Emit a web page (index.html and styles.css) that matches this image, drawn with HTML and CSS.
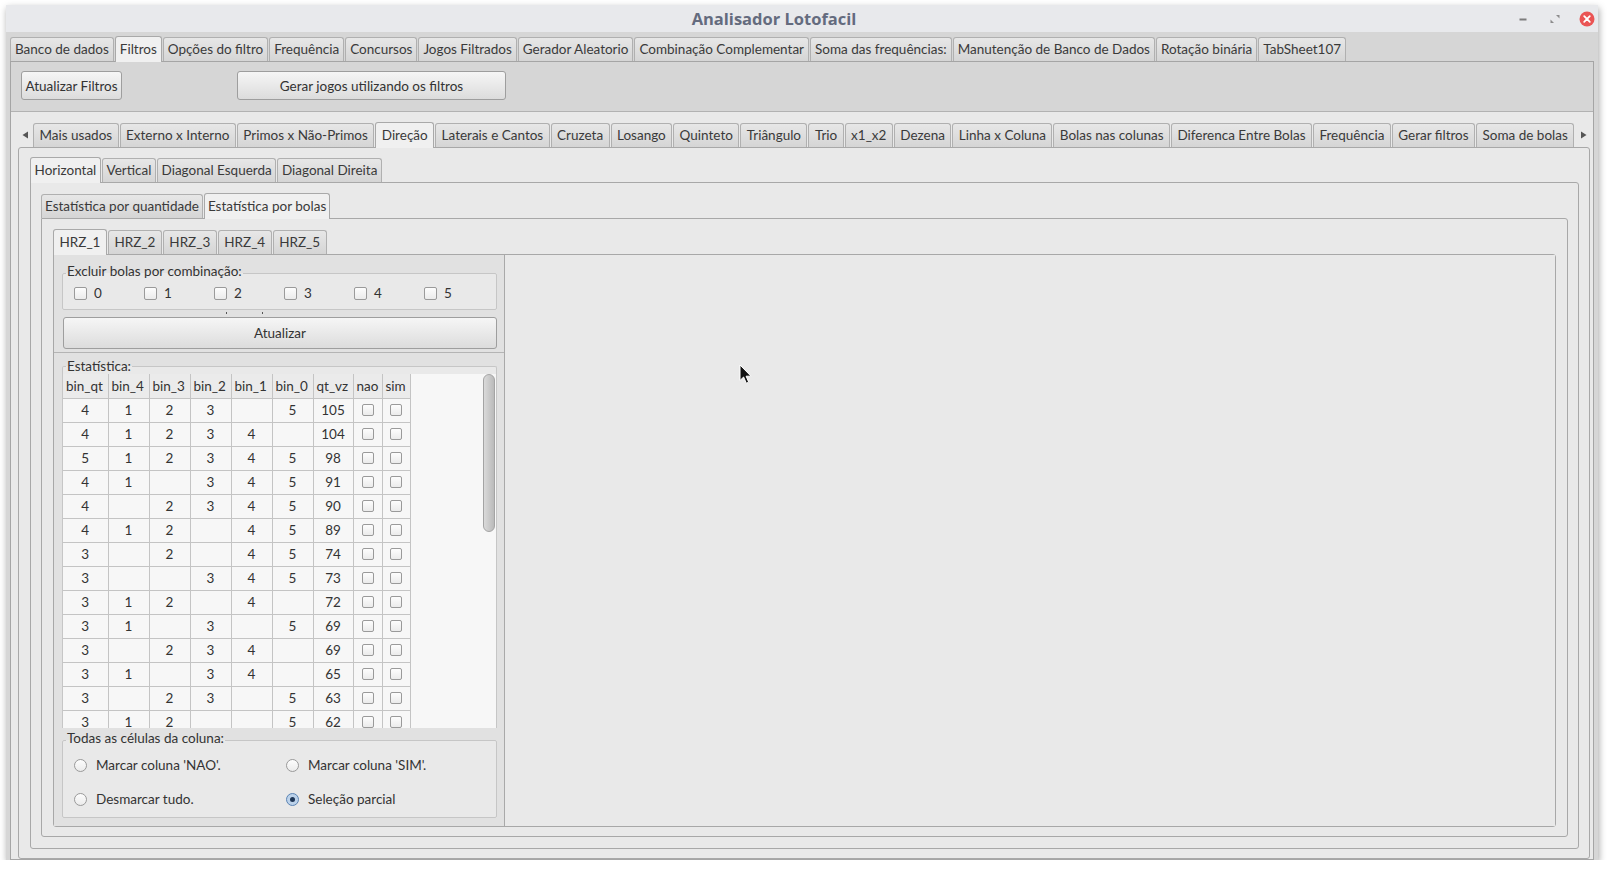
FILE: index.html
```html
<!DOCTYPE html>
<html lang="pt">
<head>
<meta charset="utf-8">
<title>Analisador Lotofacil</title>
<link rel="stylesheet" href="styles.css">
</head>
<body>
<div class="window">
  <div class="titlebar">
    <div class="title">Analisador Lotofacil</div>
    <div class="wbtns">
      <svg class="wb" viewBox="0 0 20 20"><rect x="6.5" y="9.5" width="7" height="2" fill="#7d7d7d"/></svg>
      <svg class="wb" viewBox="0 0 20 20"><polygon points="11,6 14.5,6 14.5,9.5" fill="#8c8c8c"/><polygon points="5.5,10.5 5.5,14 9,14" fill="#8c8c8c"/></svg>
      <svg class="wb" viewBox="0 0 20 20"><circle cx="10" cy="10" r="7.5" fill="#ea5454"/><path d="M7.2 7.2 L12.8 12.8 M12.8 7.2 L7.2 12.8" stroke="#fff" stroke-width="1.8" stroke-linecap="round"/></svg>
    </div>
  </div>

  <div class="tabs toptabs">
    <div class="tab">Banco de dados</div>
    <div class="tab sel">Filtros</div>
    <div class="tab">Opções do filtro</div>
    <div class="tab">Frequência</div>
    <div class="tab">Concursos</div>
    <div class="tab">Jogos Filtrados</div>
    <div class="tab">Gerador Aleatorio</div>
    <div class="tab">Combinação Complementar</div>
    <div class="tab">Soma das frequências:</div>
    <div class="tab">Manutenção de Banco de Dados</div>
    <div class="tab">Rotação binária</div>
    <div class="tab">TabSheet107</div>
  </div>

  <div class="panel filtros">
    <div class="toolbar">
      <button class="btn b1">Atualizar Filtros</button>
      <button class="btn b2">Gerar jogos utilizando os filtros</button>
    </div>
    <div class="fbody">
      <div class="tabs subtabs">
        <div class="arrow"><svg width="7" height="8" viewBox="0 0 7 8"><polygon points="6,0.5 6,7.5 0.5,4" fill="#555"/></svg></div>
        <div class="tab">Mais usados</div>
        <div class="tab">Externo x Interno</div>
        <div class="tab">Primos x Não-Primos</div>
        <div class="tab sel">Direção</div>
        <div class="tab">Laterais e Cantos</div>
        <div class="tab">Cruzeta</div>
        <div class="tab">Losango</div>
        <div class="tab">Quinteto</div>
        <div class="tab">Triângulo</div>
        <div class="tab">Trio</div>
        <div class="tab">x1_x2</div>
        <div class="tab">Dezena</div>
        <div class="tab">Linha x Coluna</div>
        <div class="tab">Bolas nas colunas</div>
        <div class="tab">Diferenca Entre Bolas</div>
        <div class="tab">Frequência</div>
        <div class="tab">Gerar filtros</div>
        <div class="tab">Soma de bolas</div>
        <div class="arrow"><svg width="7" height="8" viewBox="0 0 7 8"><polygon points="1,0.5 1,7.5 6.5,4" fill="#555"/></svg></div>
      </div>
      <div class="panel direcao">
        <div class="tabs htabs">
          <div class="tab sel">Horizontal</div>
          <div class="tab">Vertical</div>
          <div class="tab">Diagonal Esquerda</div>
          <div class="tab">Diagonal Direita</div>
        </div>
        <div class="panel horiz">
          <div class="tabs etabs">
            <div class="tab">Estatística por quantidade</div>
            <div class="tab sel">Estatística por bolas</div>
          </div>
          <div class="panel bolas">
            <div class="tabs rtabs">
              <div class="tab sel">HRZ_1</div>
              <div class="tab">HRZ_2</div>
              <div class="tab">HRZ_3</div>
              <div class="tab">HRZ_4</div>
              <div class="tab">HRZ_5</div>
            </div>
            <div class="panel hrz">
              <div class="leftpane">
                <div class="topsec">
                  <fieldset class="grp excl">
                    <legend>Excluir bolas por combinação:</legend>
                    <div class="cbrow">
                      <label class="cbi"><span class="cb"></span>0</label>
                      <label class="cbi"><span class="cb"></span>1</label>
                      <label class="cbi"><span class="cb"></span>2</label>
                      <label class="cbi"><span class="cb"></span>3</label>
                      <label class="cbi"><span class="cb"></span>4</label>
                      <label class="cbi"><span class="cb"></span>5</label>
                    </div>
                  </fieldset>
                  <div class="dots"><span class="dot"></span><span class="dot"></span></div>
                  <button class="btn atual">Atualizar</button>
                </div>
                <div class="lowsec">
                  <fieldset class="grp est">
                    <legend>Estatística:</legend>
                    <div class="vp">
                      <table class="grid">
                        <colgroup>
                          <col class="c45"><col class="c41"><col class="c41"><col class="c41"><col class="c41"><col class="c41"><col class="c40"><col class="c29"><col class="c28">
                        </colgroup>
                        <thead>
                          <tr><th>bin_qt</th><th>bin_4</th><th>bin_3</th><th>bin_2</th><th>bin_1</th><th>bin_0</th><th>qt_vz</th><th>nao</th><th>sim</th></tr>
                        </thead>
                        <tbody>
                          <tr><td>4</td><td>1</td><td>2</td><td>3</td><td></td><td>5</td><td>105</td><td><span class="cb sm"></span></td><td><span class="cb sm"></span></td></tr>
                          <tr><td>4</td><td>1</td><td>2</td><td>3</td><td>4</td><td></td><td>104</td><td><span class="cb sm"></span></td><td><span class="cb sm"></span></td></tr>
                          <tr><td>5</td><td>1</td><td>2</td><td>3</td><td>4</td><td>5</td><td>98</td><td><span class="cb sm"></span></td><td><span class="cb sm"></span></td></tr>
                          <tr><td>4</td><td>1</td><td></td><td>3</td><td>4</td><td>5</td><td>91</td><td><span class="cb sm"></span></td><td><span class="cb sm"></span></td></tr>
                          <tr><td>4</td><td></td><td>2</td><td>3</td><td>4</td><td>5</td><td>90</td><td><span class="cb sm"></span></td><td><span class="cb sm"></span></td></tr>
                          <tr><td>4</td><td>1</td><td>2</td><td></td><td>4</td><td>5</td><td>89</td><td><span class="cb sm"></span></td><td><span class="cb sm"></span></td></tr>
                          <tr><td>3</td><td></td><td>2</td><td></td><td>4</td><td>5</td><td>74</td><td><span class="cb sm"></span></td><td><span class="cb sm"></span></td></tr>
                          <tr><td>3</td><td></td><td></td><td>3</td><td>4</td><td>5</td><td>73</td><td><span class="cb sm"></span></td><td><span class="cb sm"></span></td></tr>
                          <tr><td>3</td><td>1</td><td>2</td><td></td><td>4</td><td></td><td>72</td><td><span class="cb sm"></span></td><td><span class="cb sm"></span></td></tr>
                          <tr><td>3</td><td>1</td><td></td><td>3</td><td></td><td>5</td><td>69</td><td><span class="cb sm"></span></td><td><span class="cb sm"></span></td></tr>
                          <tr><td>3</td><td></td><td>2</td><td>3</td><td>4</td><td></td><td>69</td><td><span class="cb sm"></span></td><td><span class="cb sm"></span></td></tr>
                          <tr><td>3</td><td>1</td><td></td><td>3</td><td>4</td><td></td><td>65</td><td><span class="cb sm"></span></td><td><span class="cb sm"></span></td></tr>
                          <tr><td>3</td><td></td><td>2</td><td>3</td><td></td><td>5</td><td>63</td><td><span class="cb sm"></span></td><td><span class="cb sm"></span></td></tr>
                          <tr><td>3</td><td>1</td><td>2</td><td></td><td></td><td>5</td><td>62</td><td><span class="cb sm"></span></td><td><span class="cb sm"></span></td></tr>
                        </tbody>
                      </table>
                      <div class="sbar"><div class="thumb"></div></div>
                    </div>
                  </fieldset>
                  <fieldset class="grp todas">
                    <legend>Todas as células da coluna:</legend>
                    <div class="radios">
                      <label class="ri"><span class="rb"></span>Marcar coluna 'NAO'.</label>
                      <label class="ri"><span class="rb"></span>Marcar coluna 'SIM'.</label>
                      <label class="ri"><span class="rb"></span>Desmarcar tudo.</label>
                      <label class="ri"><span class="rb on"></span>Seleção parcial</label>
                    </div>
                  </fieldset>
                </div>
              </div>
              <div class="rightpane">
                <svg class="cursor" width="14" height="21" viewBox="0 0 14 21"><path d="M1 1 L1 16.5 L4.6 13 L7.3 19.2 L9.7 18.2 L7.1 12.2 L12 12.2 Z" fill="#111" stroke="#fff" stroke-width="1" stroke-linejoin="round"/></svg>
              </div>
            </div>
          </div>
        </div>
      </div>
    </div>
  </div>
</div>
</body>
</html>
```

FILE: styles.css
```css
* { box-sizing: border-box; }
html, body { margin: 0; padding: 0; background: #ffffff; }
body {
  font-family: Lato, "Open Sans", "DejaVu Sans", sans-serif;
  font-size: 13.5px;
  color: #333;
  overflow: hidden;
}

.window {
  margin: 5px 0 0 6px;
  width: 1592px;
  height: 855px;
  background: #d6d6d6;
  box-shadow: 1px 3px 7px rgba(0, 0, 0, .35);
  display: flex;
  flex-direction: column;
}

.titlebar {
  height: 27px;
  flex: none;
  display: flex;
  align-items: center;
  background: #e8e9ec;
}
.title {
  flex: 1;
  text-align: center;
  padding-left: 29px;
  font-family: "Open Sans", Lato, sans-serif;
  font-weight: 700;
  font-size: 16.5px;
  color: #646b7e;
}
.wbtns { display: flex; gap: 12px; padding-right: 1px; }
.wb { width: 20px; height: 20px; display: block; }

/* tabs */
.tabs {
  display: flex;
  align-items: flex-end;
  gap: 1px;
  height: 26px;
  flex: none;
  margin-bottom: -1px;
  position: relative;
  z-index: 1;
}
.tab {
  height: 24px;
  margin-bottom: 1px;
  padding: 0 5px;
  border: 1px solid #b0b0b0;
  border-bottom: 0;
  border-radius: 3px 3px 0 0;
  background: linear-gradient(#e7e7e7, #d5d5d5);
  line-height: 22px;
  white-space: nowrap;
  color: #3a3a3a;
}
.tab.sel {
  height: 26px;
  margin-bottom: 0;
  padding-top: 1px;
  background: #f0f0f0;
  border-color: #a9a9a9;
}
.toptabs { margin-top: 4px; padding-left: 4px; }
.toptabs .tab { padding-left: 4px; padding-right: 4px; }
.subtabs .tab { padding-left: 5.45px; padding-right: 5.45px; }
.htabs .tab { padding-left: 3.6px; padding-right: 3.6px; }
.etabs .tab { padding-left: 3px; padding-right: 3px; }
.rtabs .tab { padding-left: 5.5px; padding-right: 5.5px; }

.arrow {
  width: 14px;
  height: 24px;
  margin-bottom: 1px;
  flex: none;
  display: flex;
  align-items: center;
  justify-content: center;
}
.subtabs .arrow:last-child { width: 16px; }

/* panels */
.panel { border: 1px solid #a8a8a8; background: #e9e9e9; }

.filtros {
  flex: 1;
  margin: 0 4px;
  display: flex;
  flex-direction: column;
  min-height: 0;
  border-color: #a5a5a5;
  background: #d6d6d6;
}
.toolbar {
  height: 50px;
  flex: none;
  border-bottom: 1px solid #b2b2b2;
  padding: 9px 10px 0;
  display: flex;
  align-items: flex-start;
}
.btn {
  height: 29px;
  border: 1px solid #9e9e9e;
  border-radius: 3px;
  background: linear-gradient(#f6f6f6, #dcdcdc);
  font: inherit;
  color: #333;
  padding: 0;
  text-align: center;
}
.b1 { width: 101px; }
.b2 { width: 269px; margin-left: 115px; }

.fbody {
  flex: 1;
  background: #e9e9e9;
  padding: 10px 3px 0 7px;
  display: flex;
  flex-direction: column;
  min-height: 0;
}

.direcao {
  flex: 1;
  border-radius: 3px;
  padding: 9px 10px 9px 11px;
  display: flex;
  flex-direction: column;
  min-height: 0;
}
.horiz {
  flex: 1;
  border-radius: 0 3px 3px 3px;
  padding: 10px 10px 11px 10px;
  display: flex;
  flex-direction: column;
  min-height: 0;
}
.bolas {
  flex: 1;
  border-radius: 0 3px 3px 3px;
  padding: 10px 11px 9px 11px;
  display: flex;
  flex-direction: column;
  min-height: 0;
}
.hrz {
  flex: 1;
  display: flex;
  min-height: 0;
  border-radius: 0 3px 3px 3px;
}

.leftpane {
  width: 451px;
  flex: none;
  border-right: 1px solid #a9a9a9;
  background: #e1e1e1;
  display: flex;
  flex-direction: column;
}
.rightpane {
  flex: 1;
  position: relative;
  background: #e9e9e9;
}
.cursor { position: absolute; left: 234px; top: 109px; }

/* group boxes */
.grp {
  margin: 0;
  padding: 0;
  min-width: 0;
  border: 1px solid #c6c6c6;
  border-radius: 2px;
  background: #e9e9e9;
}
.grp legend {
  padding: 0 1px;
  margin-left: 3px;
  line-height: 16px;
  color: #333;
}

.topsec {
  flex: none;
  padding: 8px 7px 3px 8px;
  border-bottom: 1px solid #b4b4b4;
}
.excl legend { line-height: 17px; padding-bottom: 4px; }
.cbrow {
  display: flex;
  padding: 1px 0 7px 11px;
  height: 25px;
}
.cbi {
  width: 70px;
  display: flex;
  align-items: center;
  gap: 7px;
  line-height: 17px;
}
.cb {
  display: inline-block;
  width: 13px;
  height: 13px;
  border: 1px solid #9a9a9a;
  border-radius: 2px;
  background: linear-gradient(#fdfdfd, #ebebeb);
  flex: none;
}
.cb.sm { display: block; width: 12px; height: 12px; margin: 0 auto; }

.dots {
  height: 7px;
  display: flex;
  gap: 35px;
  padding: 2px 0 0 164px;
}
.dot { width: 1px; height: 2px; background: #555; }

.atual {
  display: block;
  width: 434px;
  height: 32px;
  margin-left: 1px;
}

.lowsec {
  flex: 1;
  padding: 0 7px 8px 8px;
  display: flex;
  flex-direction: column;
}
.est {
  margin-top: 5px;
  border-bottom: 0;
  border-radius: 2px 2px 0 0;
}
.vp {
  height: 354px;
  display: flex;
  background: #f7f7f7;
  overflow: hidden;
}
.grid {
  border-collapse: collapse;
  table-layout: fixed;
  width: 347px;
  flex: none;
  align-self: flex-start;
}
.grid th, .grid td {
  border: 1px solid #c4c4c4;
  padding: 0;
  height: 24px;
  font-weight: 400;
  white-space: nowrap;
  overflow: hidden;
}
.grid th {
  text-align: left;
  padding-left: 3px;
  background: #ebebeb;
  color: #333;
}
.grid td { text-align: center; color: #333; }
.grid tr:first-child th { border-top: 0; }
.grid th:first-child, .grid td:first-child { border-left: 0; }
.c45 { width: 45px; }
.c41 { width: 41px; }
.c40 { width: 40px; }
.c29 { width: 29px; }
.c28 { width: 28px; }

.sbar {
  width: 14px;
  margin-left: auto;
  padding: 0 1px;
  flex: none;
}
.thumb {
  height: 158px;
  border: 1px solid #a4a4a4;
  border-radius: 6px;
  background: linear-gradient(90deg, #dadada, #bababa);
}

.todas { margin-top: 2px; }
.todas legend { padding-bottom: 4px; }
.radios {
  display: grid;
  grid-template-columns: 212px 1fr;
  grid-auto-rows: 17px;
  row-gap: 17px;
  padding: 7px 0 9px 11px;
}
.ri {
  display: flex;
  align-items: center;
  gap: 9px;
  line-height: 17px;
}
.rb {
  width: 13px;
  height: 13px;
  border: 1px solid #9a9a9a;
  border-radius: 50%;
  background: linear-gradient(#fdfdfd, #ebebeb);
  flex: none;
  display: flex;
  align-items: center;
  justify-content: center;
}
.rb.on {
  border-color: #5b84b4;
  background: #bcd2ea;
}
.rb.on::after {
  content: "";
  width: 5px;
  height: 5px;
  border-radius: 50%;
  background: #1e3656;
}
```
